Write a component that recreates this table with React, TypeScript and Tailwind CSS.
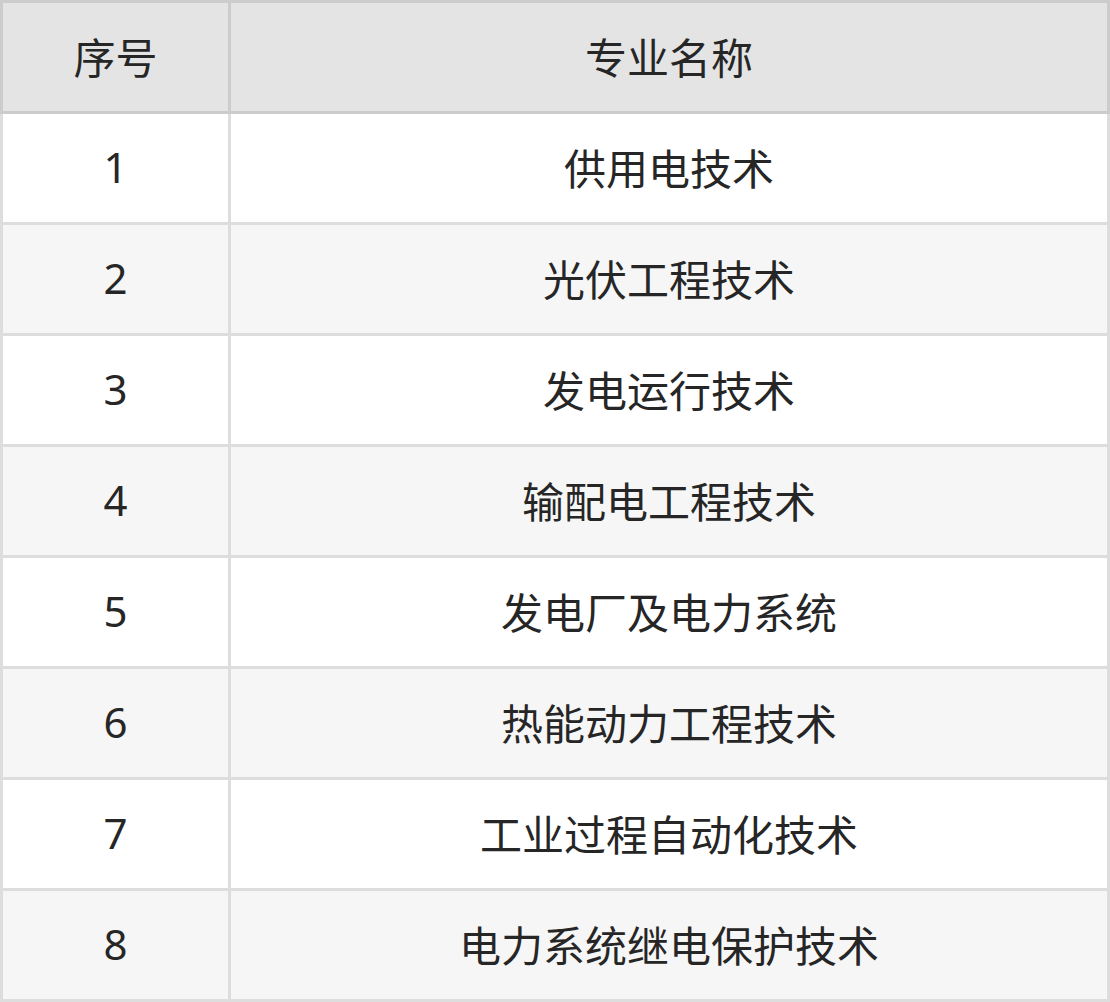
import React from 'react';

const majors: string[] = [
  '供用电技术',
  '光伏工程技术',
  '发电运行技术',
  '输配电工程技术',
  '发电厂及电力系统',
  '热能动力工程技术',
  '工业过程自动化技术',
  '电力系统继电保护技术',
];

const App: React.FC = () => {
  return (
    <div
      className="w-[1110px] text-[42px] text-[#262626]"
      style={{ fontFamily: '"Noto Sans", "Noto Sans CJK SC", sans-serif' }}
    >
      {/* header */}
      <div className="flex gap-[3px] bg-[#cccccc] p-[3px]">
        <div className="flex h-[108px] w-[225px] items-center justify-center bg-[#e4e4e4]">序号</div>
        <div className="flex h-[108px] flex-1 items-center justify-center bg-[#e4e4e4]">专业名称</div>
      </div>

      {majors.map((name, i) => (
        <div key={name} className="flex gap-[3px] bg-[#dddddd] px-[3px] pb-[3px]">
          <div
            className={`flex h-[108px] w-[225px] items-center justify-center pb-[3px] ${
              i % 2 === 0 ? 'bg-white' : 'bg-[#f6f6f6]'
            }`}
          >
            {i + 1}
          </div>
          <div
            className={`flex h-[108px] flex-1 items-center justify-center ${
              i % 2 === 0 ? 'bg-white' : 'bg-[#f6f6f6]'
            }`}
          >
            {name}
          </div>
        </div>
      ))}
    </div>
  );
};

export default App;
